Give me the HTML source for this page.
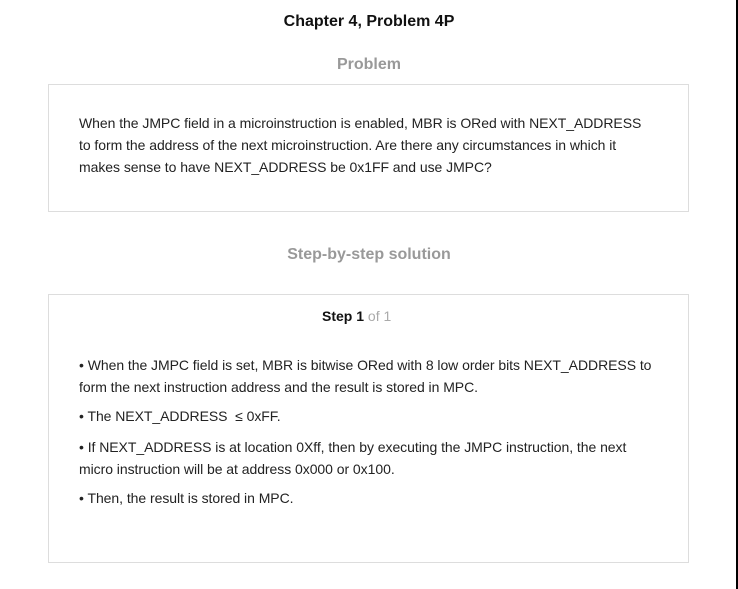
<!DOCTYPE html>
<html><head><style>
body{margin:0;width:738px;height:589px;background:#fff;font-family:"Liberation Sans",Arial,sans-serif;position:relative;overflow:hidden;color:#222}
.a{position:absolute;white-space:nowrap}
.box{position:absolute;left:48px;width:641px;border:1px solid #ddd;box-sizing:border-box}
p{margin:0;font-size:14px;line-height:22px;position:absolute;left:79px;white-space:nowrap;letter-spacing:-0.05px}
</style></head><body>
<div style="position:absolute;left:736px;top:0;width:2px;height:589px;background:#000"></div>
<div class="a" style="left:0;width:738px;text-align:center;top:13px;font-size:16px;font-weight:bold;color:#111">Chapter 4, Problem 4P</div>
<div class="a" style="left:0;width:738px;text-align:center;top:56px;font-size:16px;font-weight:bold;color:#999">Problem</div>
<div class="box" style="top:84px;height:128px"></div>
<p style="top:112px">When the JMPC field in a microinstruction is enabled, MBR is ORed with NEXT_ADDRESS<br>to form the address of the next microinstruction. Are there any circumstances in which it<br>makes sense to have NEXT_ADDRESS be 0x1FF and use JMPC?</p>
<div class="a" style="left:0;width:738px;text-align:center;top:246px;font-size:16px;font-weight:bold;color:#999">Step-by-step solution</div>
<div class="box" style="top:294px;height:269px"></div>
<div class="a" style="left:322px;top:308px;font-size:14px"><b style="color:#111">Step 1</b> <span style="color:#aaa">of 1</span></div>
<p style="top:354px">• When the JMPC field is set, MBR is bitwise ORed with 8 low order bits NEXT_ADDRESS to<br>form the next instruction address and the result is stored in MPC.</p>
<p style="top:405px">• The NEXT_ADDRESS &nbsp;≤ 0xFF.</p>
<p style="top:436px">• If NEXT_ADDRESS is at location 0Xff, then by executing the JMPC instruction, the next<br>micro instruction will be at address 0x000 or 0x100.</p>
<p style="top:487px">• Then, the result is stored in MPC.</p>
</body></html>
